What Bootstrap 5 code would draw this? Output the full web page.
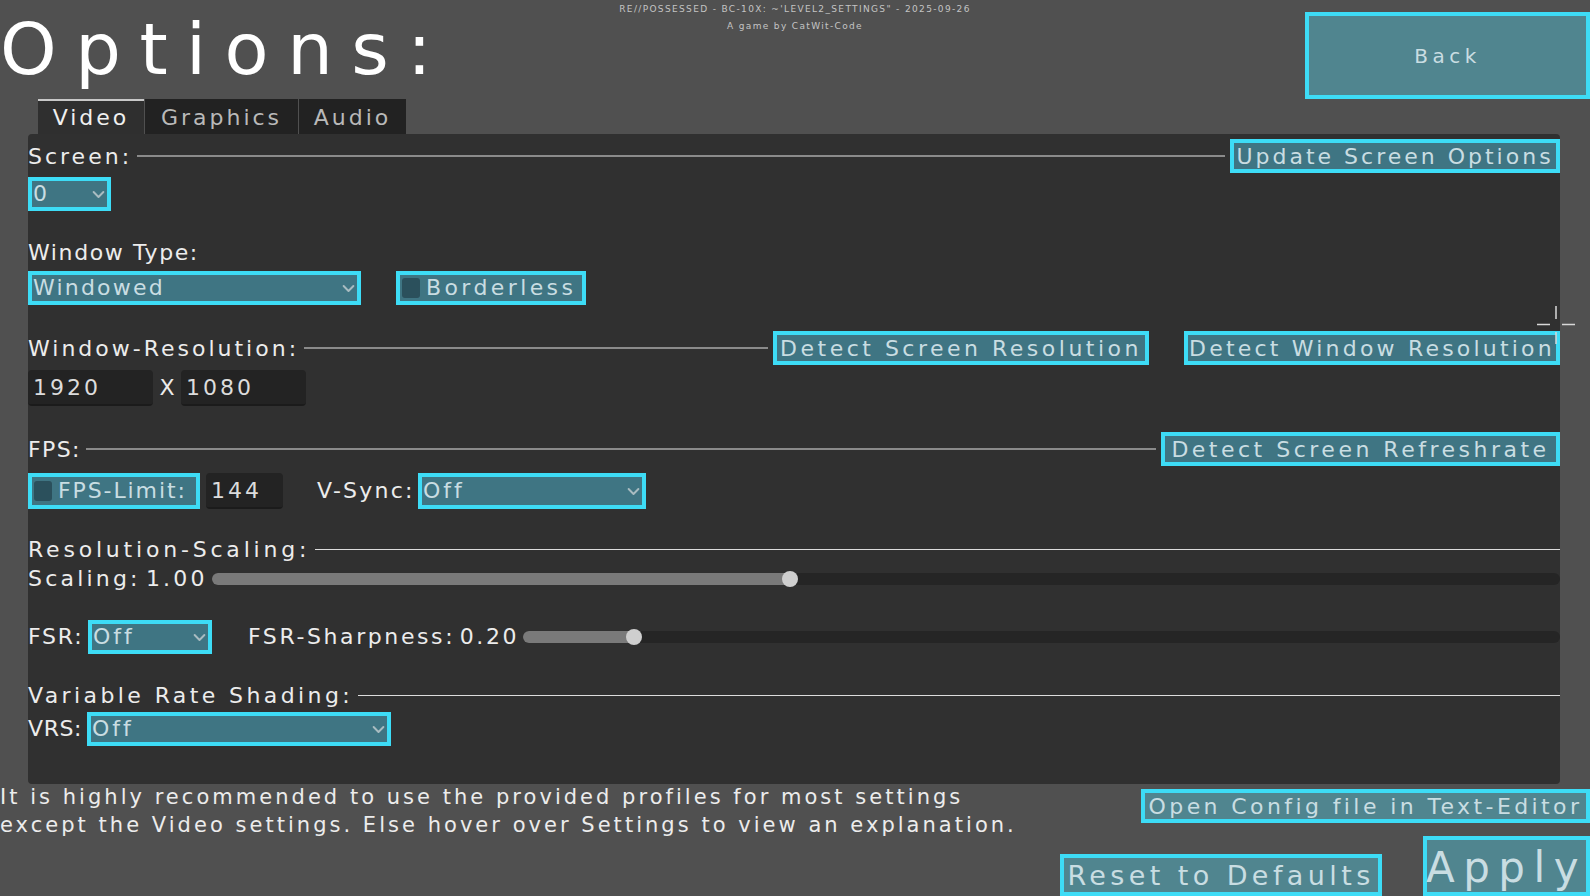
<!DOCTYPE html>
<html lang="en">
<head>
    <meta charset="UTF-8">
    <meta name="viewport" content="width=device-width, initial-scale=1.0">
    <title>Options</title>
    <link href="https://cdn.jsdelivr.net/npm/bootstrap@5.3.0/dist/css/bootstrap.min.css" rel="stylesheet">
    <style>
        html, body {
            height: 896px;
            overflow: hidden;
        }
        body {
            background-color: #505050;
            color: #ececec;
            font-family: "DejaVu Sans", sans-serif;
            font-weight: 400;
            font-size: 22px;
            letter-spacing: 3px;
            line-height: 1;
            position: relative;
        }
        .top-area {
            display: grid;
            grid-template-columns: 1fr auto 1fr;
            height: 99px;
        }
        .page-title {
            font-family: "DejaVu Sans", sans-serif;
            font-size: 72px;
            font-weight: 400;
            letter-spacing: 18.5px;
            color: #fff;
            margin: 10px 0 0 0;
            line-height: 1.1;
            white-space: nowrap;
        }
        .build-info {
            font-size: 9px;
            letter-spacing: 1.35px;
            color: #c4c4c4;
            text-align: center;
            padding-top: 5px;
        }
        .build-info div {
            height: 17px;
        }
        .ui-btn {
            background-color: #3f7583;
            border: 4px solid #3ddcf6;
            border-radius: 0;
            color: #c9dde2;
            font-size: 22px;
            letter-spacing: 3.5px;
            font-weight: 400;
            line-height: 1;
            padding: 2px 0 0 0;
            white-space: nowrap;
            height: 34px;
            display: flex;
            align-items: center;
            justify-content: center;
        }
        .ui-btn:hover {
            background-color: #3f7583;
            border-color: #3ddcf6;
            color: #c9dde2;
        }
        .on-page, .on-page:hover {
            background-color: #50858f;
        }
        .back-btn {
            width: 285px;
            height: 87px;
            margin-top: 12px;
            justify-self: end;
            font-size: 20px;
            letter-spacing: 4.5px;
            padding-top: 0;
        }
        .tab-strip {
            margin-left: 38px;
            border: 0;
            height: 35px;
            gap: 1px;
        }
        .tab-strip .nav-link {
            background-color: #222;
            color: #b9b9b9;
            border: 0;
            border-top: 2px solid #222;
            border-radius: 0;
            padding: 0;
            margin: 0;
            height: 35px;
            display: flex;
            align-items: center;
            justify-content: center;
        }
        .tab-strip .nav-link.active {
            background-color: #2f2f2f;
            color: #f0f0f0;
            border-top-color: #c8c8c8;
        }
        .tab-a { width: 106px; }
        .tab-b { width: 153px; margin-left: 1px; }
        .tab-c { width: 107px; margin-left: 2px; }
        .settings-panel {
            background-color: #303030;
            border-radius: 4px;
            margin: 0 30px 0 28px;
            height: 650px;
            padding-top: 5px;
        }
        .head-row {
            height: 34px;
            display: flex;
            align-items: center;
            gap: 5px;
            white-space: nowrap;
        }
        .head-row > span {
            padding-top: 2px;
        }
        .head-row hr {
            flex-grow: 1;
            margin: 0;
            border: 0;
            border-top: 2px solid #8a8a8a;
            opacity: 1;
        }
        .head-row hr.bright {
            border-top: 1px solid #dcdcdc;
        }
        .ctl-row {
            display: flex;
            align-items: center;
            white-space: nowrap;
        }
        .ui-select {
            background-color: #3f7583;
            background-image: url("data:image/svg+xml,%3csvg xmlns='http://www.w3.org/2000/svg' viewBox='0 0 16 16'%3e%3cpath fill='none' stroke='%23a9bcc1' stroke-linecap='round' stroke-linejoin='round' stroke-width='2.4' d='m2 5 6 6 6-6'/%3e%3c/svg%3e");
            background-position: right 2px center;
            background-size: 13px 13px;
            border: 4px solid #3ddcf6;
            border-radius: 0;
            color: #c9dde2;
            font-family: inherit;
            font-size: 22px;
            font-weight: 400;
            letter-spacing: 3px;
            line-height: 1;
            padding: 0 20px 0 1px;
            height: 34px;
        }
        .ui-check {
            background-color: #3f7583;
            border: 4px solid #3ddcf6;
            color: #c9dde2;
            height: 34px;
            display: flex;
            align-items: center;
            gap: 6px;
            padding: 0 0 0 2px;
            overflow: hidden;
            margin: 0;
        }
        .ui-check .form-check-input {
            background-color: #2b505c;
            border: 0;
            border-radius: 3px;
            width: 18px;
            height: 20px;
            margin: 0;
            flex-shrink: 0;
        }
        .num-input {
            background-color: #232323;
            border: 0;
            border-bottom: 2px solid #1b1b1b;
            border-radius: 4px;
            color: #dcdcdc;
            font-family: inherit;
            font-size: 22px;
            font-weight: 400;
            letter-spacing: 3px;
            height: 36px;
            padding: 0 5px;
        }
        .num-input:focus {
            background-color: #232323;
            color: #dcdcdc;
        }
        .slider-box {
            position: relative;
            flex-grow: 1;
        }
        .slider-box .progress {
            background-color: #252525;
            height: 12px;
            border-radius: 6px;
        }
        .slider-box .progress-bar {
            background-color: #7a7a7a;
        }
        .slider-thumb {
            position: absolute;
            top: -2px;
            width: 16px;
            height: 16px;
            margin-left: -8px;
            border-radius: 50%;
            background-color: #cfcfcf;
        }
        .note-text {
            font-size: 21px;
            line-height: 28px;
            letter-spacing: 3.03px;
            color: #ececec;
            margin: -6px 0 0 0;
            white-space: nowrap;
        }
        .bottom-area {
            display: flex;
            justify-content: space-between;
            height: 112px;
            padding-top: 5px;
        }
        .bottom-right {
            display: flex;
            flex-direction: column;
            align-items: flex-end;
        }
        .btn-line {
            display: flex;
            align-items: flex-end;
            margin-top: 13px;
        }
        .reset-btn {
            width: 322px;
            height: 42px;
            margin-right: 41px;
            font-size: 27px;
            letter-spacing: 4.4px;
            padding-top: 0;
        }
        .apply-btn {
            width: 167px;
            height: 60px;
            font-size: 42px;
            letter-spacing: 8.5px;
            padding-top: 4px;
        }
        .cursor-mark {
            position: absolute;
            left: 1537px;
            top: 306px;
            width: 38px;
            height: 38px;
        }
        .btn-update { width: 330px; letter-spacing: 3px; }
        .btn-detect { width: 376px; }
        .btn-detect-gap { margin-left: 30px; letter-spacing: 3.2px; }
        .btn-rate { width: 399px; }
        .btn-config { width: 449px; letter-spacing: 3.4px; }
        .sel-screen { width: 83px; }
        .sel-type { width: 333px; letter-spacing: 2.2px; }
        .sel-vsync { width: 228px; height: 36px; }
        .sel-fsr { width: 124px; }
        .sel-vrs { width: 304px; }
        .chk-border { width: 190px; margin-left: 35px; letter-spacing: 3.4px; }
        .chk-fps { width: 172px; height: 36px; letter-spacing: 1.9px; }
        .inp-res { width: 125px; }
        .inp-fps { width: 77px; margin-left: 6px; }
        .x-sep { width: 28px; text-align: center; letter-spacing: 0; }
        .lbl-vsync { width: 95px; margin-left: 34px; margin-right: 6px; letter-spacing: 2.2px; }
        .lbl-scaling { width: 184px; letter-spacing: 3.2px; word-spacing: -5px; }
        .lbl-fsr { width: 60px; letter-spacing: 1.8px; }
        .lbl-sharp { width: 275px; margin-left: 36px; letter-spacing: 2.6px; word-spacing: -5px; }
        .lbl-vrs { width: 59px; letter-spacing: 0.6px; }
        .head-wide { letter-spacing: 3.8px; }
        .head-var { letter-spacing: 3.4px; }
        .head-type { letter-spacing: 1.6px; }
        .head-fps { letter-spacing: 1.4px; }
        .mt-type { margin-top: 24px; }
        .mt-type-ctl { margin-top: 2px; }
        .mt-res { margin-top: 26px; }
        .mt-res-ctl { margin-top: 5px; }
        .mt-fps { margin-top: 26px; }
        .mt-fps-ctl { margin-top: 7px; }
        .mt-scale { margin-top: 23px; }
        .mt-scale-ctl { margin-top: 1px; height: 24px; }
        .mt-fsr { margin-top: 29px; }
        .mt-vrs { margin-top: 24px; }
    </style>
</head>
<body>

<div class="top-area">
    <h1 class="page-title">Options:</h1>
    <div class="build-info">
        <div>RE//POSSESSED - BC-10X: ~'LEVEL2_SETTINGS" - 2025-09-26</div>
        <div>A game by CatWit-Code</div>
    </div>
    <button class="btn ui-btn on-page back-btn">Back</button>
</div>

<ul class="nav nav-tabs tab-strip">
    <li class="nav-item"><a class="nav-link tab-a active" href="#">Video</a></li>
    <li class="nav-item"><a class="nav-link tab-b" href="#">Graphics</a></li>
    <li class="nav-item"><a class="nav-link tab-c" href="#">Audio</a></li>
</ul>

<div class="settings-panel">
    <div class="head-row">
        <span>Screen:</span>
        <hr>
        <button class="btn ui-btn btn-update">Update Screen Options</button>
    </div>
    <div class="ctl-row mt-1">
        <select class="form-select ui-select sel-screen"><option>0</option></select>
    </div>

    <div class="head-row mt-type">
        <span class="head-type">Window Type:</span>
    </div>
    <div class="ctl-row mt-type-ctl">
        <select class="form-select ui-select sel-type"><option>Windowed</option></select>
        <label class="ui-check chk-border">
            <input class="form-check-input" type="checkbox">Borderless
        </label>
    </div>

    <div class="head-row mt-res">
        <span>Window-Resolution:</span>
        <hr>
        <button class="btn ui-btn btn-detect">Detect Screen Resolution</button>
        <button class="btn ui-btn btn-detect btn-detect-gap">Detect Window Resolution</button>
    </div>
    <div class="ctl-row mt-res-ctl">
        <input class="form-control num-input inp-res" value="1920">
        <span class="x-sep">X</span>
        <input class="form-control num-input inp-res" value="1080">
    </div>

    <div class="head-row mt-fps">
        <span class="head-fps">FPS:</span>
        <hr>
        <button class="btn ui-btn btn-rate">Detect Screen Refreshrate</button>
    </div>
    <div class="ctl-row mt-fps-ctl">
        <label class="ui-check chk-fps">
            <input class="form-check-input" type="checkbox">FPS-Limit:
        </label>
        <input class="form-control num-input inp-fps" value="144">
        <span class="lbl-vsync">V-Sync:</span>
        <select class="form-select ui-select sel-vsync"><option>Off</option></select>
    </div>

    <div class="head-row mt-scale">
        <span class="head-wide">Resolution-Scaling:</span>
        <hr class="bright">
    </div>
    <div class="ctl-row mt-scale-ctl">
        <span class="lbl-scaling">Scaling: 1.00</span>
        <div class="slider-box">
            <div class="progress"><div class="progress-bar" style="width: 42.9%"></div></div>
            <div class="slider-thumb" style="left: 42.9%"></div>
        </div>
    </div>

    <div class="ctl-row mt-fsr">
        <span class="lbl-fsr">FSR:</span>
        <select class="form-select ui-select sel-fsr"><option>Off</option></select>
        <span class="lbl-sharp">FSR-Sharpness: 0.20</span>
        <div class="slider-box">
            <div class="progress"><div class="progress-bar" style="width: 10.7%"></div></div>
            <div class="slider-thumb" style="left: 10.7%"></div>
        </div>
    </div>

    <div class="head-row mt-vrs">
        <span class="head-var">Variable Rate Shading:</span>
        <hr class="bright">
    </div>
    <div class="ctl-row">
        <span class="lbl-vrs">VRS:</span>
        <select class="form-select ui-select sel-vrs"><option>Off</option></select>
    </div>
</div>

<div class="bottom-area">
    <p class="note-text">It is highly recommended to use the provided profiles for most settings<br>except the Video settings. Else hover over Settings to view an explanation.</p>
    <div class="bottom-right">
        <button class="btn ui-btn on-page btn-config">Open Config file in Text-Editor</button>
        <div class="btn-line">
            <button class="btn ui-btn on-page reset-btn">Reset to Defaults</button>
            <button class="btn ui-btn on-page apply-btn">Apply</button>
        </div>
    </div>
</div>

<svg class="cursor-mark" viewBox="0 0 38 38">
    <path d="M0 18.5H13M25 18.5H38M19 0V13M19 26V38" stroke="#d8d8d8" stroke-width="1.5" fill="none"/>
</svg>

<script src="https://cdn.jsdelivr.net/npm/bootstrap@5.3.0/dist/js/bootstrap.bundle.min.js"></script>
</body>
</html>
